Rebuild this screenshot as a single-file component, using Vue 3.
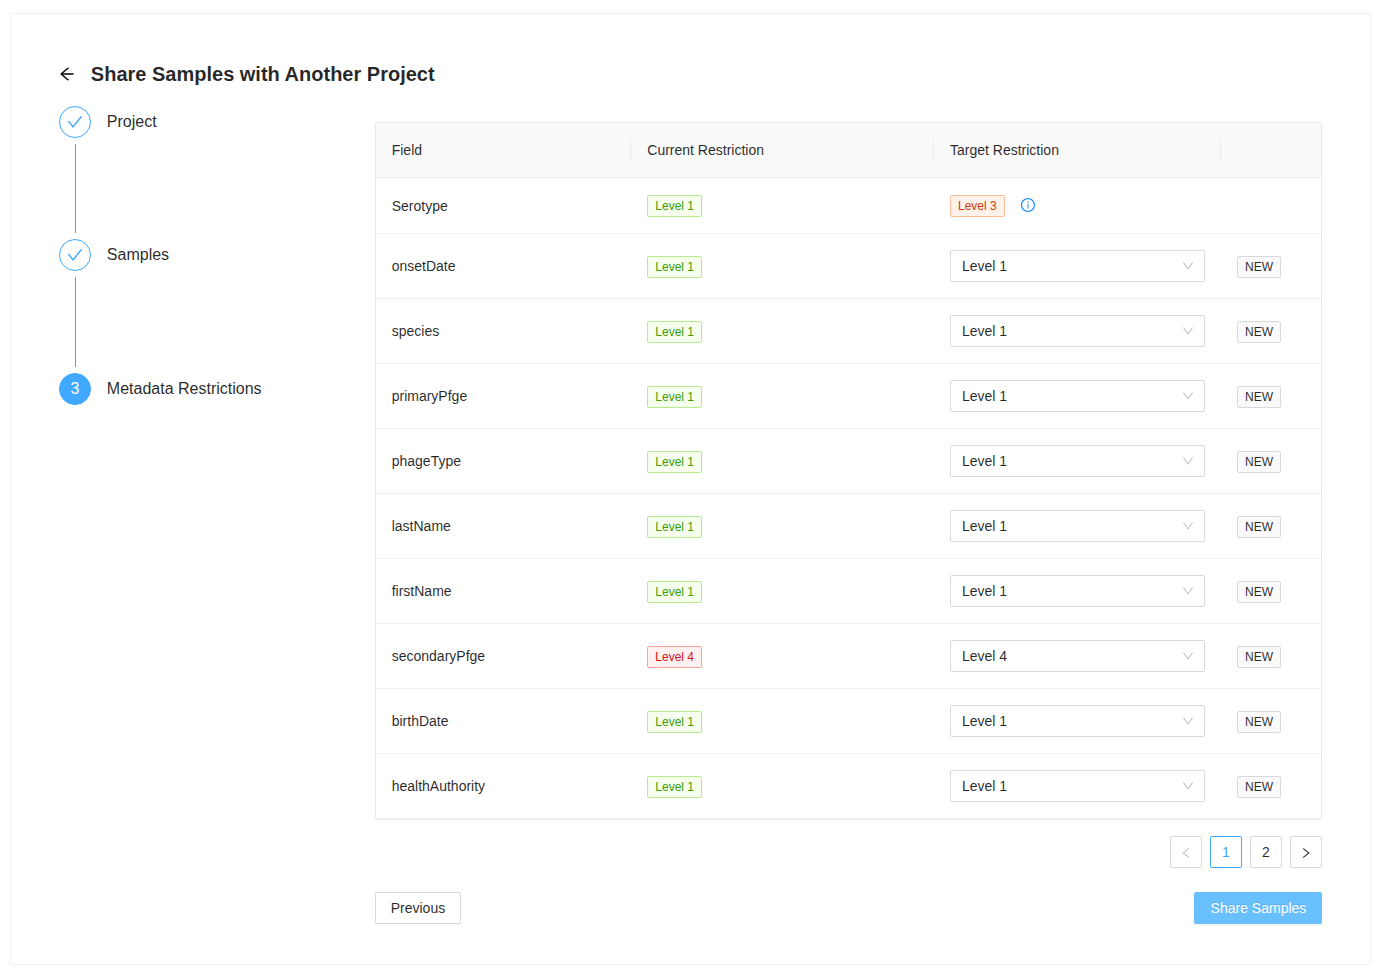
<script setup>
const steps = [
  { title: 'Project', done: true },
  { title: 'Samples', done: true },
  { title: 'Metadata Restrictions', done: false },
]

const rows = [
  { field: 'Serotype', current: 1, target: 3, existing: true },
  { field: 'onsetDate', current: 1, target: 1 },
  { field: 'species', current: 1, target: 1 },
  { field: 'primaryPfge', current: 1, target: 1 },
  { field: 'phageType', current: 1, target: 1 },
  { field: 'lastName', current: 1, target: 1 },
  { field: 'firstName', current: 1, target: 1 },
  { field: 'secondaryPfge', current: 4, target: 4 },
  { field: 'birthDate', current: 1, target: 1 },
  { field: 'healthAuthority', current: 1, target: 1 },
]
</script>

<template>
  <main class="card">
    <header class="page-header">
      <svg class="back" viewBox="64 64 896 896" width="16" height="16" fill="currentColor">
        <path d="M872 474H286.9l350.2-304c5.6-4.9 2.2-14-5.2-14h-88.5c-3.9 0-7.6 1.4-10.5 3.9L155 487.8a31.96 31.96 0 000 48.3L535.1 866c1.5 1.3 3.3 2 5.2 2h91.5c7.4 0 10.8-9.2 5.2-14L286.9 550H872c4.4 0 8-3.6 8-8v-60c0-4.4-3.6-8-8-8z" />
      </svg>
      <h1>Share Samples with Another Project</h1>
    </header>

    <div class="body">
      <nav class="steps">
        <div v-for="(step, i) in steps" :key="step.title" class="step">
          <div class="rail">
            <span class="step-icon" :class="{ active: !step.done }">
              <svg v-if="step.done" viewBox="64 64 896 896" width="16" height="16" fill="currentColor">
                <path d="M912 190h-69.9c-9.8 0-19.1 4.5-25.1 12.2L404.7 724.5 207 474a32 32 0 00-25.1-12.2H112c-6.7 0-10.4 7.7-6.3 12.9l273.9 347c12.8 16.2 37.4 16.2 50.3 0l488.4-618.9c4.1-5.1.4-12.8-6.3-12.8z" />
              </svg>
              <template v-else>{{ i + 1 }}</template>
            </span>
            <span v-if="i < steps.length - 1" class="tail"></span>
          </div>
          <span class="step-title">{{ step.title }}</span>
        </div>
      </nav>

      <section class="content">
        <div class="table">
          <div class="row head">
            <div class="cell">Field</div>
            <div class="cell">Current Restriction</div>
            <div class="cell">Target Restriction</div>
            <div class="cell"></div>
          </div>
          <div v-for="row in rows" :key="row.field" class="row" :class="{ short: row.existing }">
            <div class="cell">{{ row.field }}</div>
            <div class="cell"><span class="tag" :class="`level-${row.current}`">Level {{ row.current }}</span></div>
            <div class="cell">
              <template v-if="row.existing">
                <span class="tag" :class="`level-${row.target}`">Level {{ row.target }}</span>
                <svg class="info" viewBox="64 64 896 896" width="14" height="14" fill="currentColor">
                  <path d="M512 64C264.600 64 64 264.600 64 512s200.600 448 448 448 448-200.600 448-448S759.400 64 512 64zm0 820c-205.400 0-372-166.600-372-372s166.600-372 372-372 372 166.600 372 372-166.600 372-372 372z" />
                  <path d="M464 336a48 48 0 1096 0 48 48 0 10-96 0zm72 112h-48c-4.400 0-8 3.600-8 8v272c0 4.400 3.600 8 8 8h48c4.400 0 8-3.600 8-8V456c0-4.400-3.600-8-8-8z" />
                </svg>
              </template>
              <div v-else class="select">
                <span>Level {{ row.target }}</span>
                <svg viewBox="64 64 896 896" width="12" height="12" fill="currentColor">
                  <path d="M884 256h-75c-5.100 0-9.900 2.500-12.900 6.600L512 654.200 227.900 262.600c-3-4.100-7.800-6.600-12.900-6.600h-75c-6.500 0-10.300 7.400-6.500 12.700l352.600 486.100c12.800 17.600 39 17.600 51.700 0l352.600-486.100c3.900-5.300.1-12.700-6.400-12.700z" />
                </svg>
              </div>
            </div>
            <div class="cell"><span v-if="!row.existing" class="tag">NEW</span></div>
          </div>
        </div>

        <div class="pagination">
          <button class="page disabled" aria-label="Previous page">
            <svg viewBox="64 64 896 896" width="12" height="12" fill="currentColor">
              <path d="M724 218.300V141c0-6.700-7.700-10.400-12.900-6.300L260.300 486.800a31.860 31.860 0 000 50.300l450.800 352.100c5.300 4.100 12.900.4 12.900-6.300v-77.300c0-4.900-2.300-9.600-6.100-12.600l-360-281 360-281.100c3.800-3 6.100-7.700 6.100-12.600z" />
            </svg>
          </button>
          <button class="page current">1</button>
          <button class="page">2</button>
          <button class="page" aria-label="Next page">
            <svg viewBox="64 64 896 896" width="12" height="12" fill="currentColor">
              <path d="M765.700 486.800L314.900 134.700A7.970 7.970 0 00302 141v77.300c0 4.900 2.300 9.600 6.100 12.600l360 281.100-360 281.100c-3.900 3-6.100 7.700-6.100 12.600V883c0 6.700 7.700 10.400 12.900 6.300l450.800-352.100a31.960 31.960 0 000-50.400z" />
            </svg>
          </button>
        </div>

        <footer class="actions">
          <button class="btn">Previous</button>
          <button class="btn primary">Share Samples</button>
        </footer>
      </section>
    </div>
  </main>
</template>

<style>
body {
  background: #fff;
}
</style>

<style scoped>
*,
*::before {
  box-sizing: border-box;
}

.card {
  width: 1361px;
  height: 952px;
  margin: 13px 0 0 10px;
  padding: 44px 48px 0 47.85px;
  border: 1px solid #f0f0f0;
  border-radius: 2px;
  font: 14px/22px "Liberation Sans", Arial, sans-serif;
  color: rgba(0, 0, 0, 0.85);
}

svg {
  display: block;
  flex: none;
}

.page-header {
  display: flex;
  align-items: center;
  gap: 16px;
  height: 32px;
}

.back {
  color: #000;
}

h1 {
  margin: 0;
  font-size: 20px;
  font-weight: 600;
  line-height: 32px;
}

.body {
  display: flex;
  justify-content: space-between;
  align-items: flex-start;
}

.steps {
  display: flex;
  flex-direction: column;
  padding-top: 16px;
}

.step {
  display: flex;
  gap: 16px;
  height: 133.4px;
}

.rail {
  display: flex;
  flex-direction: column;
  align-items: center;
  gap: 6px;
  width: 32px;
  padding-bottom: 6px;
}

.step-icon {
  display: flex;
  align-items: center;
  justify-content: center;
  flex: none;
  width: 32px;
  height: 32px;
  border: 1px solid #40a9ff;
  border-radius: 50%;
  color: #40a9ff;
  font-size: 16px;
  line-height: 16px;
}

.step-icon.active {
  background: #40a9ff;
  color: #fff;
}

.tail {
  flex: 1;
  width: 1px;
  margin-left: 1px;
  background: #40a9ff;
}

.step-title {
  font-size: 16px;
  line-height: 32px;
}

.content {
  width: 947.3px;
  padding-top: 32px;
}

.table {
  border: 1px solid #e8e8e8;
  border-radius: 2px;
}

.row {
  display: grid;
  grid-template-columns: 255.6px 302.7px 287px 1fr;
  height: 65px;
  border-bottom: 1px solid #f0f0f0;
}

.row.short {
  height: 56px;
}

.row.head {
  height: 55px;
  background: #fafafa;
}

.cell {
  position: relative;
  display: flex;
  align-items: center;
  padding: 0 16px;
}

.short .cell {
  padding-top: 1px;
}

.head .cell:not(:last-child)::before {
  content: "";
  position: absolute;
  top: 16px;
  right: 0;
  width: 1px;
  height: 22px;
  background: #ebebeb;
}

.tag {
  height: 22px;
  margin-top: 2px;
  padding: 0 7px;
  border: 1px solid #d9d9d9;
  border-radius: 2px;
  background: #fafafa;
  font-size: 12px;
  line-height: 20px;
  white-space: nowrap;
}

.short .tag {
  margin-top: 0;
}

.level-1 {
  color: #389e0d;
  background: #f6ffed;
  border-color: #b7eb8f;
}

.level-3 {
  color: #d4380d;
  background: #fff2e8;
  border-color: #ffbb96;
}

.level-4 {
  color: #cf1322;
  background: #fff1f0;
  border-color: #ffa39e;
}

.info {
  margin: 0 0 2px 16px;
  color: #1890ff;
}

.select {
  display: flex;
  align-items: center;
  justify-content: space-between;
  width: 255px;
  height: 32px;
  padding: 0 10px 0 11px;
  border: 1px solid #d9d9d9;
  border-radius: 2px;
  background: #fff;
}

.select svg {
  color: rgba(0, 0, 0, 0.25);
}

.pagination {
  display: flex;
  justify-content: flex-end;
  gap: 8px;
  margin-top: 16px;
}

button {
  font-family: inherit;
  font-size: 14px;
  color: inherit;
  background: #fff;
  border: 1px solid #d9d9d9;
  border-radius: 2px;
  white-space: nowrap;
}

.page {
  display: flex;
  align-items: center;
  justify-content: center;
  width: 32px;
  height: 32px;
  padding: 0;
}

.page svg {
  margin-top: 2px;
}

.page.disabled {
  color: rgba(0, 0, 0, 0.25);
}

.page.current {
  color: #40a9ff;
  border-color: #40a9ff;
}

.actions {
  display: flex;
  justify-content: space-between;
  margin-top: 24px;
}

.btn {
  height: 32px;
  padding: 0 15px;
  line-height: 22px;
  box-shadow: 0 2px 0 rgba(0, 0, 0, 0.016);
}

.btn.primary {
  padding: 0 14.7px 0 15.2px;
  color: #fff;
  background: #69c0ff;
  border-color: #69c0ff;
  text-shadow: 0 -1px 0 rgba(0, 0, 0, 0.12);
  box-shadow: 0 2px 0 rgba(0, 0, 0, 0.045);
}
</style>
